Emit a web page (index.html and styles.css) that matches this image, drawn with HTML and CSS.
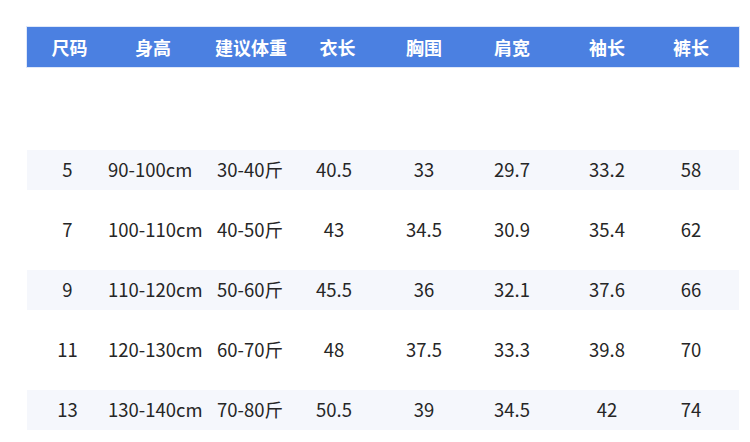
FILE: index.html
```html
<!DOCTYPE html>
<html lang="zh-CN">
<head>
<meta charset="utf-8">
<title>尺码表</title>
<link rel="stylesheet" href="styles.css">
</head>
<body>
<div class="chart">
  <div class="row head">
    <div>尺码</div><div>身高</div><div>建议体重</div><div>衣长</div><div>胸围</div><div>肩宽</div><div>袖长</div><div>裤长</div>
  </div>
  <div class="spacer"></div>
  <div class="row stripe">
    <div>5</div><div>90-100cm</div><div>30-40斤</div><div>40.5</div><div>33</div><div>29.7</div><div>33.2</div><div>58</div>
  </div>
  <div class="row plain">
    <div>7</div><div>100-110cm</div><div>40-50斤</div><div>43</div><div>34.5</div><div>30.9</div><div>35.4</div><div>62</div>
  </div>
  <div class="row stripe">
    <div>9</div><div>110-120cm</div><div>50-60斤</div><div>45.5</div><div>36</div><div>32.1</div><div>37.6</div><div>66</div>
  </div>
  <div class="row plain">
    <div>11</div><div>120-130cm</div><div>60-70斤</div><div>48</div><div>37.5</div><div>33.3</div><div>39.8</div><div>70</div>
  </div>
  <div class="row stripe">
    <div>13</div><div>130-140cm</div><div>70-80斤</div><div>50.5</div><div>39</div><div>34.5</div><div>42</div><div>74</div>
  </div>
</div>
</body>
</html>
```
FILE: styles.css
```css
html, body {
  margin: 0;
  padding: 0;
  background: #ffffff;
}
body {
  font-family: "Noto Sans CJK SC", "Noto Sans", sans-serif;
  color: #262626;
  overflow: hidden;
}
.chart {
  padding: 27px 0 0 27px;
  width: 712px;
}
.row {
  display: grid;
  grid-template-columns: 81px 107px 85px 68px 112px 64px 126px 42px;
  padding-right: 27px;
  align-items: center;
  justify-items: center;
  white-space: nowrap;
  line-height: 1;
}
.row > div:nth-child(2),
.row > div:nth-child(3) {
  justify-self: start;
}
.head {
  height: 40px;
  background: #4b80e1;
  color: #ffffff;
  font-size: 18px;
  font-weight: 700;
  box-shadow: 0 0 0 1px #dfe8f9;
}
.head > div:nth-child(1) {
  padding-left: 4px;
}
.head > div:nth-child(2) {
  padding-left: 27px;
}
.head > div:nth-child(4) {
  padding-left: 7px;
}
.spacer {
  height: 83px;
}
.stripe,
.plain {
  font-size: 18.5px;
  padding-bottom: 2px;
  box-sizing: border-box;
}
.stripe > div:nth-child(3),
.plain > div:nth-child(3) {
  padding-left: 2px;
}
.stripe {
  height: 40px;
  background: #f5f7fc;
}
.plain {
  height: 80px;
}
```
